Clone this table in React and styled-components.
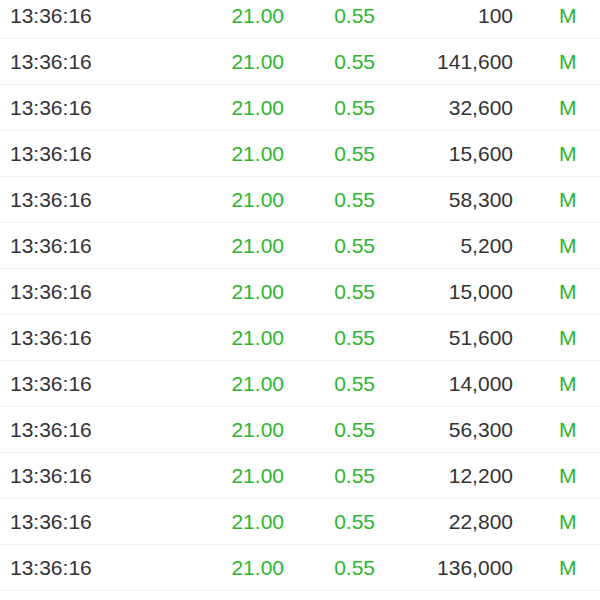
import styled, { createGlobalStyle } from "styled-components";

const trades = [
    { time: "13:36:16", price: "21.00", change: "0.55", volume: "100", side: "M" },
    { time: "13:36:16", price: "21.00", change: "0.55", volume: "141,600", side: "M" },
    { time: "13:36:16", price: "21.00", change: "0.55", volume: "32,600", side: "M" },
    { time: "13:36:16", price: "21.00", change: "0.55", volume: "15,600", side: "M" },
    { time: "13:36:16", price: "21.00", change: "0.55", volume: "58,300", side: "M" },
    { time: "13:36:16", price: "21.00", change: "0.55", volume: "5,200", side: "M" },
    { time: "13:36:16", price: "21.00", change: "0.55", volume: "15,000", side: "M" },
    { time: "13:36:16", price: "21.00", change: "0.55", volume: "51,600", side: "M" },
    { time: "13:36:16", price: "21.00", change: "0.55", volume: "14,000", side: "M" },
    { time: "13:36:16", price: "21.00", change: "0.55", volume: "56,300", side: "M" },
    { time: "13:36:16", price: "21.00", change: "0.55", volume: "12,200", side: "M" },
    { time: "13:36:16", price: "21.00", change: "0.55", volume: "22,800", side: "M" },
    { time: "13:36:16", price: "21.00", change: "0.55", volume: "136,000", side: "M" },
];

const App = () => {
    return (
        <>
            <GlobalStyle />
            <List>
                {trades.map((t, i) => (
                    <Row key={i}>
                        <Cell>{t.time}</Cell>
                        <Cell $align="right" $green>{t.price}</Cell>
                        <Cell $align="right" $green>{t.change}</Cell>
                        <Cell $align="right">{t.volume}</Cell>
                        <Side>{t.side}</Side>
                    </Row>
                ))}
            </List>
        </>
    );
};

const GlobalStyle = createGlobalStyle`
    html, body {
        margin: 0;
        padding: 0;
        background: #fff;
        overflow: hidden;
    }
    body {
        font-family: "Liberation Sans", Arial, sans-serif;
    }
`;

const List = styled.div`
    display: flex;
    flex-direction: column;
    margin-top: -7px;
`;

const Row = styled.div`
    display: grid;
    grid-template-columns: 174px 100px 91px 138px 1fr;
    align-items: center;
    height: 45px;
    padding-left: 10px;
    border-bottom: 1px solid #efefef;
    font-size: 21px;
    color: #333;
`;

const Cell = styled.div`
    text-align: ${props => props.$align || "left"};
    color: ${props => (props.$green ? "#2db52d" : "#333")};
    white-space: nowrap;
`;

const Side = styled.div`
    padding-left: 46px;
    color: #2db52d;
`;

export default App;
